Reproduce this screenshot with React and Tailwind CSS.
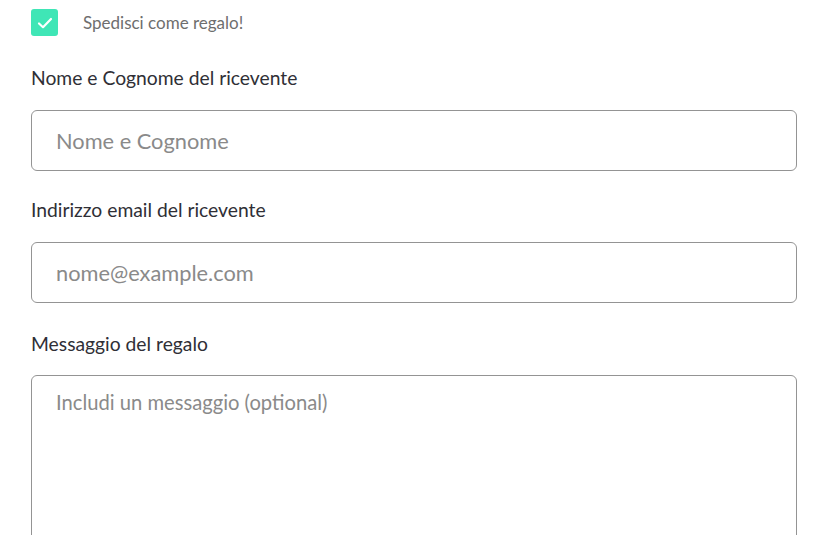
const font = { fontFamily: '"Lato", "Open Sans", sans-serif' };

function Label({ children, className = "" }) {
  return (
    <label className={`block text-[19.3px] leading-[24px] text-[#2f2f36] ${className}`}>{children}</label>
  );
}

export default function App() {
  return (
    <div style={font} className="w-[822px] h-[535px] overflow-hidden bg-white pl-[31px] pr-[25px] pt-[9px]">
      <div className="flex items-center h-[27px]">
        <div className="w-[27px] h-[27px] rounded-[3px] bg-[#3fe6b6] flex items-center justify-center">
          <svg width="18" height="18" viewBox="0 0 18 18" fill="none">
            <path d="M3 9.5 L7 13.2 L15 5" stroke="white" strokeWidth="2.2" strokeLinecap="round" strokeLinejoin="round" />
          </svg>
        </div>
        <span className="ml-[25px] text-[17px] text-[#6e6e6e]">Spedisci come regalo!</span>
      </div>

      <Label className="mt-[30px]">Nome e Cognome del ricevente</Label>
      <input
        className="mt-[20px] block w-full h-[61px] rounded-[6px] border-[1.5px] border-[#949494] pl-[24px] text-[21.8px] text-[#333] placeholder:text-[#8a8a8a] outline-none"
        placeholder="Nome e Cognome"
      />

      <Label className="mt-[27px]">Indirizzo email del ricevente</Label>
      <input
        className="mt-[20px] block w-full h-[61px] rounded-[6px] border-[1.5px] border-[#949494] pl-[24px] text-[21.8px] text-[#333] placeholder:text-[#8a8a8a] outline-none"
        placeholder="nome@example.com"
      />

      <Label className="mt-[29px]">Messaggio del regalo</Label>
      <textarea
        className="mt-[19px] block w-full h-[200px] resize-none rounded-[6px] border-[1.5px] border-[#949494] pl-[24px] pt-[12px] text-[20.2px] leading-[28px] text-[#333] placeholder:text-[#8a8a8a] outline-none"
        placeholder="Includi un messaggio (optional)"
      />
    </div>
  );
}
